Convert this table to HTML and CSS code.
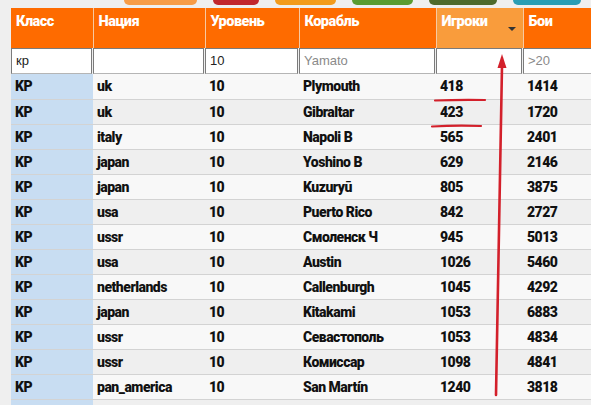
FILE: index.html
```html
<!DOCTYPE html>
<html>
<head>
<meta charset="utf-8">
<link rel="stylesheet" href="styles.css">
</head>
<body>
<div class="tabs">
  <span class="tab t1"></span><span class="tab t2"></span><span class="tab t3"></span><span class="tab t4"></span><span class="tab t5"></span><span class="tab t6"></span>
</div>
<table class="grid">
  <colgroup>
    <col class="c1"><col class="c2"><col class="c3"><col class="c4"><col class="c5"><col class="c6">
  </colgroup>
  <thead>
    <tr class="head">
      <th>Класс</th><th>Нация</th><th>Уровень</th><th>Корабль</th><th class="sorted">Игроки<span class="caret"></span></th><th>Бои</th>
    </tr>
    <tr class="filters">
      <td><div class="inp">кр</div></td>
      <td><div class="inp"></div></td>
      <td><div class="inp">10</div></td>
      <td><div class="inp ph">Yamato</div></td>
      <td><div class="inp"></div></td>
      <td><div class="inp ph">&gt;20</div></td>
    </tr>
  </thead>
  <tbody>
    <tr><td class="cls">KP</td><td>uk</td><td>10</td><td>Plymouth</td><td>418</td><td>1414</td></tr>
    <tr><td class="cls">KP</td><td>uk</td><td>10</td><td>Gibraltar</td><td>423</td><td>1720</td></tr>
    <tr><td class="cls">KP</td><td>italy</td><td>10</td><td>Napoli B</td><td>565</td><td>2401</td></tr>
    <tr><td class="cls">KP</td><td>japan</td><td>10</td><td>Yoshino B</td><td>629</td><td>2146</td></tr>
    <tr><td class="cls">KP</td><td>japan</td><td>10</td><td>Kuzuryū</td><td>805</td><td>3875</td></tr>
    <tr><td class="cls">KP</td><td>usa</td><td>10</td><td>Puerto Rico</td><td>842</td><td>2727</td></tr>
    <tr><td class="cls">KP</td><td>ussr</td><td>10</td><td>Смоленск Ч</td><td>945</td><td>5013</td></tr>
    <tr><td class="cls">KP</td><td>usa</td><td>10</td><td>Austin</td><td>1026</td><td>5460</td></tr>
    <tr><td class="cls">KP</td><td>netherlands</td><td>10</td><td>Callenburgh</td><td>1045</td><td>4292</td></tr>
    <tr><td class="cls">KP</td><td>japan</td><td>10</td><td>Kitakami</td><td>1053</td><td>6883</td></tr>
    <tr><td class="cls">KP</td><td>ussr</td><td>10</td><td>Севастополь</td><td>1053</td><td>4834</td></tr>
    <tr><td class="cls">KP</td><td>ussr</td><td>10</td><td>Комиссар</td><td>1098</td><td>4841</td></tr>
    <tr><td class="cls">KP</td><td>pan_america</td><td>10</td><td>San Martín</td><td>1240</td><td>3818</td></tr>
    <tr class="tail"><td class="cls"></td><td></td><td></td><td></td><td></td><td></td></tr>
  </tbody>
</table>
<svg class="marks" width="591" height="405" viewBox="0 0 591 405">
  <path d="M435 100.5 Q460 99.5 485 100" stroke="#d3202b" stroke-width="2.2" fill="none" stroke-linecap="round"/>
  <path d="M432 126.5 Q457 125 481 126" stroke="#d3202b" stroke-width="2.2" fill="none" stroke-linecap="round"/>
  <path d="M496 395 L502 66" stroke="#d3202b" stroke-width="2.6" fill="none" stroke-linecap="round"/>
  <path d="M502 54 L497.5 68 L506.5 68 Z" fill="#d3202b"/>
</svg>
</body>
</html>
```
FILE: styles.css
```css
html, body {
  margin: 0;
  padding: 0;
}
body {
  background: #efefef;
  width: 591px;
  height: 405px;
  overflow: hidden;
  position: relative;
  font-family: Roboto, "Liberation Sans", sans-serif;
}
.tabs {
  display: flex;
  gap: 16px;
  padding-left: 124px;
  height: 8px;
}
.tab {
  display: block;
  height: 5px;
  border-radius: 0 0 6px 6px;
}
.t1 { width: 73px; background: #f79c47; }
.t2 { width: 46px; background: #c1272d; }
.t3 { width: 61px; background: #f29b1d; }
.t4 { width: 61px; background: #5a9c30; }
.t5 { width: 68px; background: #4e6a2c; }
.t6 { width: 68px; background: #2a9db4; }

.grid {
  border-collapse: collapse;
  margin-left: 11px;
  table-layout: fixed;
  width: 580px;
}
.c1 { width: 82px; }
.c2 { width: 112px; }
.c3 { width: 94px; }
.c4 { width: 137px; }
.c5 { width: 87px; }
.c6 { width: 68px; }

.head th {
  background: #fe6b00;
  color: #fff;
  height: 40px;
  padding: 0 0 0 5px;
  text-align: left;
  vertical-align: top;
  font-weight: 900;
  font-size: 14.5px;
  letter-spacing: -0.5px;
  line-height: 14px;
  padding-top: 7px;
  box-sizing: border-box;
  border-left: 1px solid #f7c9a2;
  position: relative;
}
.head th:first-child { border-left: none; }
.head th.sorted { background: #f99c3c; }
.caret {
  position: absolute;
  right: 7px;
  top: 19px;
  width: 0;
  height: 0;
  border-left: 4px solid transparent;
  border-right: 4px solid transparent;
  border-top: 4px solid #333;
}

.filters td {
  padding: 0 1px 0 0;
  height: 26px;
  box-sizing: border-box;
}
.filters td:last-child { padding-right: 0; }
.inp {
  height: 26px;
  box-sizing: border-box;
  background: #fff;
  border: 1px solid #7b7b7b;
  border-bottom-color: #b5b5b5;
  font-family: "Liberation Sans", Arial, sans-serif;
  font-size: 13px;
  color: #222;
  line-height: 24px;
  padding-left: 4px;
}
.filters td:last-child .inp { border-right: none; }
.inp.ph { color: #8a8a8a; }

tbody td {
  height: 25px;
  box-sizing: border-box;
  padding: 0 0 0 4px;
  font-weight: 900;
  font-size: 14px;
  letter-spacing: -0.5px;
  color: #111;
  border-bottom: 1px solid #d3d3d3;
  background: #f8f8f8;
  white-space: nowrap;
  overflow: hidden;
}
tbody tr:nth-child(even) td { background: #efefef; }
tbody td.cls,
tbody tr:nth-child(even) td.cls { background: #c8ddf2; }
tbody tr.tail td { border-bottom: none; }

.marks {
  position: absolute;
  left: 0;
  top: 0;
  pointer-events: none;
}
```
